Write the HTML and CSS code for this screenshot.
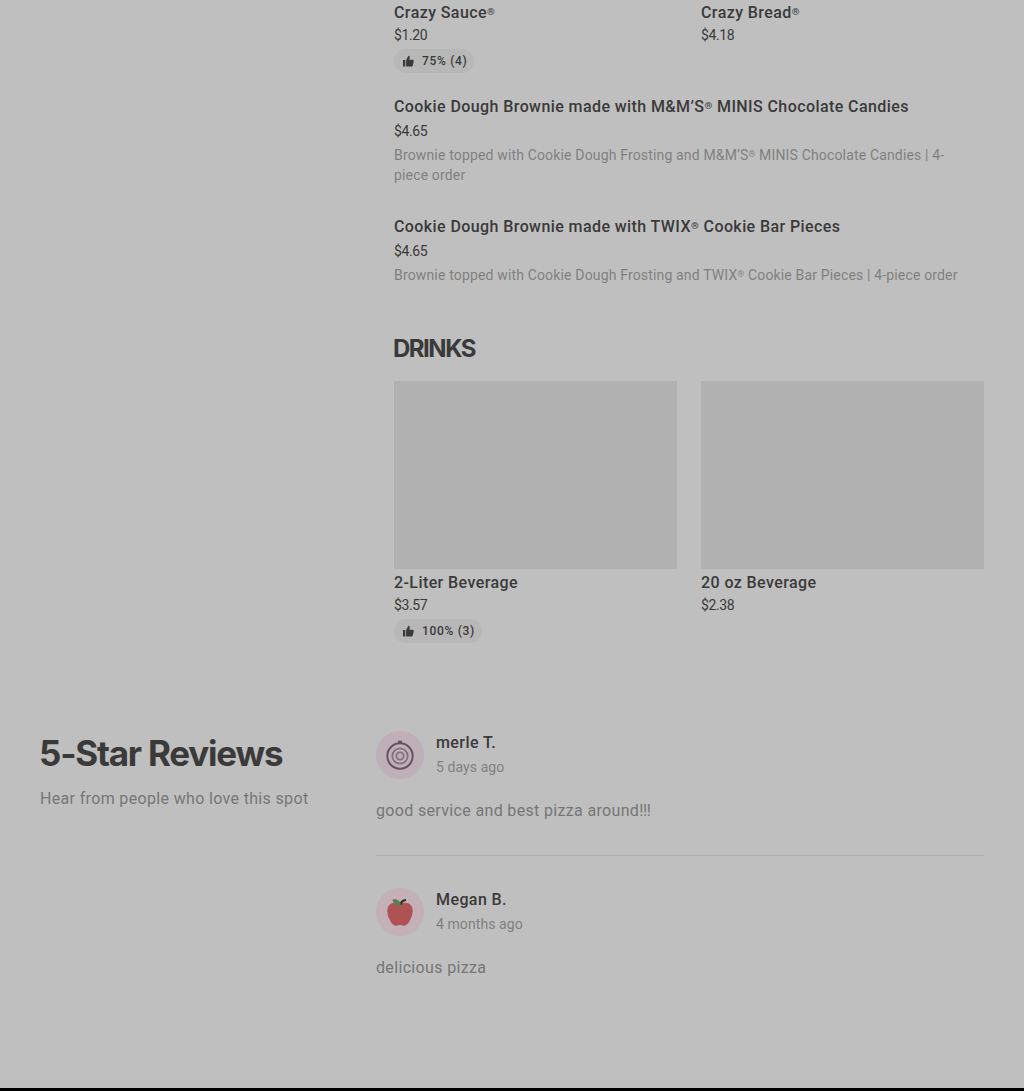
FILE: index.html
```
<!DOCTYPE html>
<html lang="en">
<head>
<meta charset="utf-8">
<title>Menu and reviews</title>
<link rel="stylesheet" href="styles.css">
</head>
<body>
<main class="page">
  <section class="menu">
    <div class="grid sides">
      <article>
        <h3 class="title">Crazy Sauce<span class="reg">®</span></h3>
        <p class="price">$1.20</p>
        <div class="rating"><svg class="thumb" viewBox="0 0 12 12"><path d="M0 5h2.5v7H0zM3.400 5.200 5.800.4C7.200.5 7.600 1.500 7.300 2.700L6.800 4.500h3.400c1.100 0 1.700.7 1.500 1.800l-.9 4.200c-.2 1-.9 1.500-1.900 1.500H3.400z"/></svg><span>75% (4)</span></div>
      </article>
      <article>
        <h3 class="title">Crazy Bread<span class="reg">®</span></h3>
        <p class="price">$4.18</p>
      </article>
    </div>
    <article class="wide">
      <h3 class="title">Cookie Dough Brownie made with M&amp;M’S<span class="reg">®</span> MINIS Chocolate Candies</h3>
      <p class="price">$4.65</p>
      <p class="desc">Brownie topped with Cookie Dough Frosting and M&amp;M’S<span class="reg">®</span> MINIS Chocolate Candies | 4-<br>piece order</p>
    </article>
    <article class="wide">
      <h3 class="title">Cookie Dough Brownie made with TWIX<span class="reg">®</span> Cookie Bar Pieces</h3>
      <p class="price">$4.65</p>
      <p class="desc">Brownie topped with Cookie Dough Frosting and TWIX<span class="reg">®</span> Cookie Bar Pieces | 4-piece order</p>
    </article>
    <h2 class="category">DRINKS</h2>
    <div class="grid">
      <article>
        <div class="photo"></div>
        <h3 class="title">2-Liter Beverage</h3>
        <p class="price">$3.57</p>
        <div class="rating"><svg class="thumb" viewBox="0 0 12 12"><path d="M0 5h2.5v7H0zM3.400 5.200 5.800.4C7.200.5 7.600 1.500 7.300 2.700L6.800 4.500h3.400c1.100 0 1.700.7 1.500 1.800l-.9 4.200c-.2 1-.9 1.500-1.900 1.500H3.400z"/></svg><span>100% (3)</span></div>
      </article>
      <article>
        <div class="photo"></div>
        <h3 class="title">20 oz Beverage</h3>
        <p class="price">$2.38</p>
      </article>
    </div>
  </section>
  <section class="reviews">
    <header>
      <h1 class="heading">5-Star Reviews</h1>
      <p class="body">Hear from people who love this spot</p>
    </header>
    <div>
      <article class="review">
        <div class="author">
          <svg class="avatar" viewBox="0 0 48 48"><circle class="disc" cx="24" cy="24" r="24"/><g class="rings"><circle cx="24" cy="25" r="12.7" stroke-width="2"/><circle class="soft" cx="24" cy="25" r="7.7" stroke-width="1.8"/><circle class="soft" cx="24" cy="25" r="3.6" stroke-width="1.8"/><path d="M22 10.8h4" stroke-width="2.2"/></g></svg>
          <div><h3 class="title">merle T.</h3><p class="date">5 days ago</p></div>
        </div>
        <p class="body">good service and best pizza around<span class="bangs">!!!</span></p>
      </article>
      <article class="review">
        <div class="author">
          <svg class="avatar" viewBox="0 0 48 48"><circle class="disc pink" cx="24" cy="24" r="24"/><path class="apple" d="M24 16.2c3-2 8-2 10.8 1 3 3.200 2 9.200.2 13-1.900 4.500-4.500 7.600-7.500 7.600-1.500 0-2-.7-3.500-.7s-2 .7-3.500.7c-3 0-5.600-3.100-7.500-7.600-1.800-3.800-2.800-9.800.2-13 2.800-3 7.800-3 10.800-1z"/><path class="stem" d="M24.500 17c.3-3 2.200-4.700 5.500-5"/><path class="leaf" d="M25 18.200c-4.200.7-7.800-1.700-8.500-6.700 5-1 8.200 1.700 8.500 6.700z"/></svg>
          <div><h3 class="title">Megan B.</h3><p class="date">4 months ago</p></div>
        </div>
        <p class="body">delicious pizza</p>
      </article>
    </div>
  </section>
</main>
<footer class="footer"></footer>
</body>
</html>
```
FILE: styles.css
```
* { box-sizing: border-box; }
body {
  margin: 0;
  height: 1091px;
  display: flex;
  flex-direction: column;
  overflow: hidden;
  background: #bfbfbf;
  color: #3a3a3a;
  font-family: Roboto, "Liberation Sans", sans-serif;
}
h1, h2, h3, p { margin: 0; }
.page { flex: 1; }
.menu { margin-left: 394px; width: 590px; }
.grid { display: grid; grid-template-columns: 1fr 1fr; column-gap: 24px; }
.sides { height: 94px; }
.wide { height: 120px; white-space: nowrap; }
.title {
  height: 24px;
  padding-top: 1px;
  font-size: 16px;
  line-height: 24px;
  font-weight: 500;
  letter-spacing: .41px;
}
.reg { font-size: .62em; line-height: 1; vertical-align: .35em; }
.price { margin-top: 1px; font-size: 14px; line-height: 20px; letter-spacing: -.4px; }
.wide .price { margin-top: 3px; }
.desc { margin-top: 4px; font-size: 14px; line-height: 20px; letter-spacing: .16px; color: #7f7f7f; }
.rating {
  display: inline-flex;
  align-items: center;
  gap: 8px;
  height: 24px;
  margin-top: 4px;
  padding: 0 7px 0 9px;
  border-radius: 12px;
  background: #b7b7b7;
  font-size: 12px;
  line-height: 20px;
  font-weight: 500;
  letter-spacing: .68px;
}
.thumb { width: 11px; height: 12px; fill: #3a3a3a; }
.category {
  padding-top: 1px;
  margin-left: -1px;
  height: 47px;
  font: 700 24px/28px Inter, sans-serif;
  letter-spacing: -1.5px;
}
.photo { height: 188px; margin-bottom: 1px; background: #b1b1b1; }
.reviews {
  display: grid;
  grid-template-columns: 336px 608px;
  padding: 88px 40px 0;
}
.heading {
  margin-left: -1px;
  font: 700 35px/44px Inter, sans-serif;
  letter-spacing: -1.22px;
}
.body {
  height: 24px;
  padding-top: 1px;
  font-size: 16px;
  line-height: 24px;
  letter-spacing: .34px;
  color: #767676;
}
.heading + .body { margin-top: 11px; }
.bangs { letter-spacing: -.3px; }
.author { display: flex; gap: 12px; height: 48px; }
.author .title { margin-top: -1px; }
.avatar { width: 48px; height: 48px; }
.date { margin-top: 3px; font-size: 14px; line-height: 20px; letter-spacing: .08px; color: #7f7f7f; }
.review .body { margin-top: 19px; }
.review + .review { margin-top: 33px; padding-top: 32px; border-top: 1px solid #b0b0b0; }
.disc { fill: #bfafb8; }
.disc.pink { fill: #c3b1b7; }
.rings { fill: none; stroke: #68505f; }
.soft { stroke: #86707e; }
.apple { fill: #ae5254; }
.leaf { fill: #637b55; }
.stem { fill: none; stroke: #342b2b; stroke-width: 2.2; }
.footer { height: 3px; background: #000; }
```
